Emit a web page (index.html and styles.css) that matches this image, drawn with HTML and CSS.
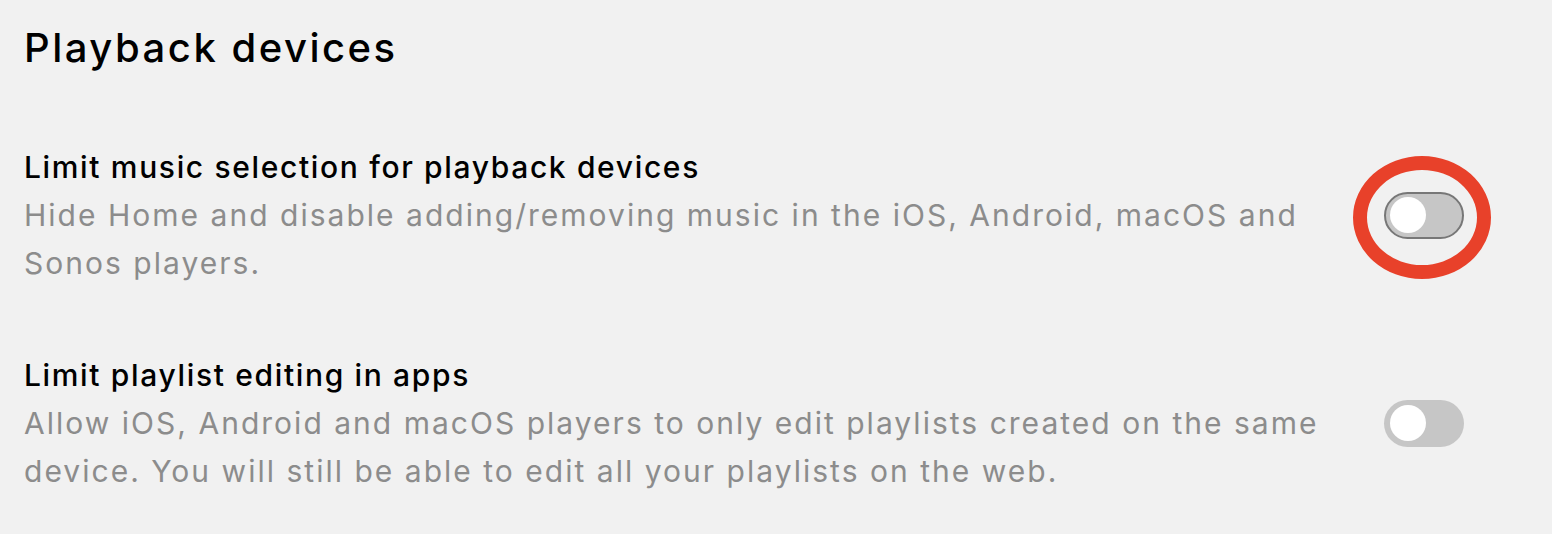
FILE: index.html
```html
<!DOCTYPE html>
<html lang="en">
<head>
<meta charset="utf-8">
<link rel="stylesheet" href="styles.css">
</head>
<body>
<main class="page">
  <h1 class="heading">Playback devices</h1>
  <section class="settings">
    <div class="setting">
      <div class="text">
        <div class="title">Limit music selection for playback devices</div>
        <div class="desc">Hide Home and disable adding/removing music in the iOS, Android, macOS and Sonos players.</div>
      </div>
      <div class="toggle-wrap highlighted">
        <span class="toggle focused"><span class="knob"></span></span>
      </div>
    </div>
    <div class="setting">
      <div class="text">
        <div class="title">Limit playlist editing in apps</div>
        <div class="desc">Allow iOS, Android and macOS players to only edit playlists created on the same device. You will still be able to edit all your playlists on the web.</div>
      </div>
      <div class="toggle-wrap">
        <span class="toggle"><span class="knob"></span></span>
      </div>
    </div>
  </section>
</main>
</body>
</html>
```

FILE: styles.css
```css
html, body {
  margin: 0;
  padding: 0;
  background: #f1f1f1;
}
body {
  font-family: Inter, "Noto Sans", sans-serif;
  color: #000;
}
.page {
  padding: 24px 88px 0 24px;
}
.heading {
  margin: 0;
  font-size: 40px;
  line-height: 48px;
  font-weight: 500;
  letter-spacing: 2.5px;
}
.settings {
  margin-top: 71px;
  display: flex;
  flex-direction: column;
  gap: 64px;
}
.setting {
  display: flex;
  align-items: center;
  gap: 44px;
}
.text {
  flex: 1;
  font-size: 30px;
  line-height: 48px;
}
.title {
  font-weight: 500;
  color: #000;
  letter-spacing: 1.65px;
}
.desc {
  color: #8c8c8c;
  letter-spacing: 2.02px;
}
.toggle-wrap {
  position: relative;
  width: 80px;
  height: 47px;
  flex: none;
}
.toggle {
  display: flex;
  align-items: center;
  box-sizing: border-box;
  width: 80px;
  height: 47px;
  border-radius: 24px;
  background: #c6c6c6;
  padding: 0 6px;
}
.toggle.focused {
  border: 2px solid #777;
  padding: 0 4px;
}
.knob {
  width: 36px;
  height: 36px;
  border-radius: 50%;
  background: #fff;
}
.highlighted::after {
  content: "";
  position: absolute;
  left: -31px;
  top: -36px;
  width: 138px;
  height: 123px;
  box-sizing: border-box;
  border: 14px solid #e8412a;
  border-radius: 50%;
}
```
